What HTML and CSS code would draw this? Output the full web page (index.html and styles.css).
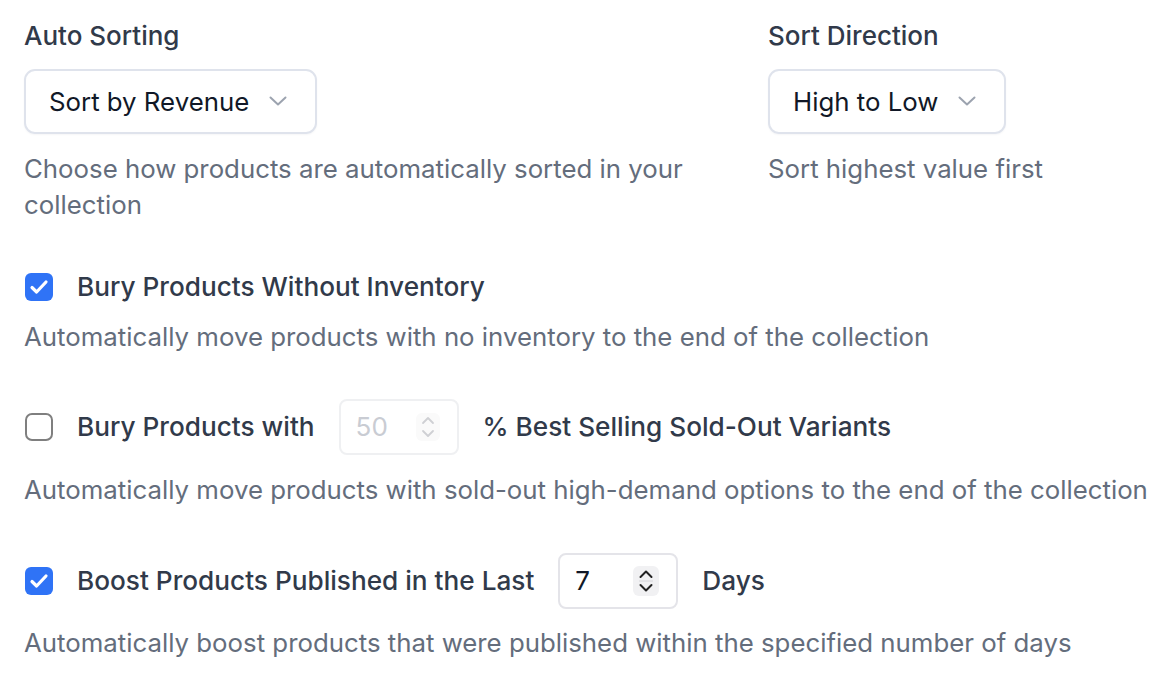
FILE: index.html
```html
<!DOCTYPE html>
<html lang="en">
<head>
    <meta charset="UTF-8">
    <meta name="viewport" content="width=device-width, initial-scale=1.0">
    <title>Collection Sorting</title>
    <link rel="stylesheet" href="styles.css">
</head>
<body>
    <div class="settings">
        <div class="sort-grid">
            <div class="field">
                <div class="field-label">Auto Sorting</div>
                <div class="select-box">
                    <span>Sort by Revenue</span>
                    <svg class="chevron" width="18" height="10" viewBox="0 0 18 10"><path d="M1.5 1.5 L9 8.5 L16.5 1.5" fill="none" stroke="#9ca3af" stroke-width="2" stroke-linecap="round" stroke-linejoin="round"/></svg>
                </div>
                <p class="help">Choose how products are automatically sorted in your collection</p>
            </div>
            <div class="field">
                <div class="field-label">Sort Direction</div>
                <div class="select-box">
                    <span>High to Low</span>
                    <svg class="chevron" width="18" height="10" viewBox="0 0 18 10"><path d="M1.5 1.5 L9 8.5 L16.5 1.5" fill="none" stroke="#9ca3af" stroke-width="2" stroke-linecap="round" stroke-linejoin="round"/></svg>
                </div>
                <p class="help">Sort highest value first</p>
            </div>
        </div>

        <div class="option first">
            <div class="option-row">
                <span class="checkbox checked">
                    <svg width="20" height="16" viewBox="0 0 20 16"><path d="M3 8.5 L7.6 13 L17 3" fill="none" stroke="#fff" stroke-width="3.2" stroke-linecap="round" stroke-linejoin="round"/></svg>
                </span>
                <span class="option-label">Bury Products Without Inventory</span>
            </div>
            <p class="help">Automatically move products with no inventory to the end of the collection</p>
        </div>

        <div class="option">
            <div class="option-row">
                <span class="checkbox"></span>
                <span class="option-label">Bury Products with</span>
                <div class="number-input disabled">
                    <span>50</span>
                    <span class="spinner">
                        <svg width="14" height="24" viewBox="0 0 14 24"><path d="M2 8 L7 3 L12 8" fill="none" stroke="currentColor" stroke-width="1.8" stroke-linecap="round" stroke-linejoin="round"/><path d="M2 16 L7 21 L12 16" fill="none" stroke="currentColor" stroke-width="1.8" stroke-linecap="round" stroke-linejoin="round"/></svg>
                    </span>
                </div>
                <span class="option-label">% Best Selling Sold-Out Variants</span>
            </div>
            <p class="help">Automatically move products with sold-out high-demand options to the end of the collection</p>
        </div>

        <div class="option last">
            <div class="option-row">
                <span class="checkbox checked">
                    <svg width="20" height="16" viewBox="0 0 20 16"><path d="M3 8.5 L7.6 13 L17 3" fill="none" stroke="#fff" stroke-width="3.2" stroke-linecap="round" stroke-linejoin="round"/></svg>
                </span>
                <span class="option-label">Boost Products Published in the Last</span>
                <div class="number-input">
                    <span>7</span>
                    <span class="spinner">
                        <svg width="16" height="26" viewBox="0 0 16 26"><path d="M2.5 9 L8 3.5 L13.5 9" fill="none" stroke="currentColor" stroke-width="2" stroke-linecap="round" stroke-linejoin="round"/><line x1="1" y1="13" x2="15" y2="13" stroke="#d6d6da" stroke-width="1"/><path d="M2.5 17 L8 22.5 L13.5 17" fill="none" stroke="currentColor" stroke-width="2" stroke-linecap="round" stroke-linejoin="round"/></svg>
                    </span>
                </div>
                <span class="option-label">Days</span>
            </div>
            <p class="help">Automatically boost products that were published within the specified number of days</p>
        </div>
    </div>
</body>
</html>
```

FILE: styles.css
```css
:root {
    --label-color: #313a4a;
    --help-color: #646d7c;
    --value-color: #111827;
    --border-color: #dfe3ec;
    --accent-color: #2f73f6;
}
* { margin: 0; padding: 0; box-sizing: border-box; }
body { font-family: Inter, "Noto Sans", "Liberation Sans", sans-serif; background: #fff; color: var(--label-color); }
.settings { padding: 18px 0 0 24px; width: 1158px; overflow: hidden; }
.sort-grid { display: grid; grid-template-columns: 695px 1fr; column-gap: 49px; }
.field { display: flex; flex-direction: column; align-items: flex-start; }
.field-label { font-size: 26px; line-height: 36px; font-weight: 500; color: var(--label-color); }
.select-box { display: inline-flex; align-items: center; gap: 20px; margin-top: 15px; height: 65px; padding: 0 28px 0 23px; border: 2px solid var(--border-color); border-radius: 11px; font-size: 25.8px; line-height: 36px; color: var(--value-color); box-shadow: 0 1px 2px rgba(16, 24, 40, 0.04); }
.chevron { display: block; flex-shrink: 0; margin-top: -2px; }
.help { font-size: 25.8px; line-height: 36px; color: var(--help-color); margin-top: 17px; }
.option { margin-top: 44px; }
.option.first { margin-top: 46px; }
.option.first .help { margin-top: 14px; }
.option.last { margin-top: 45px; }
.option-row { display: flex; align-items: center; gap: 24px; font-size: 26.2px; line-height: 36px; }
.option-label { font-weight: 500; color: var(--label-color); white-space: nowrap; }
.option .help { white-space: nowrap; }
.option.last .help { margin-top: 16px; }
.checkbox { width: 28px; height: 28px; margin-left: 1px; border: 2.5px solid #7f7f7f; border-radius: 7px; background: #fff; display: flex; align-items: center; justify-content: center; flex-shrink: 0; }
.checkbox.checked { background: var(--accent-color); border: none; border-radius: 6px; }
.number-input { display: flex; align-items: center; justify-content: space-between; width: 120px; height: 56px; padding: 0 17px 0 15px; border: 2px solid #e4e4e9; border-radius: 8px; font-size: 26px; color: var(--value-color); }
.number-input.disabled { border-color: #eff0f2; color: #c9ccd3; }
.spinner { display: flex; align-items: center; justify-content: center; width: 26px; height: 30px; border-radius: 6px; background: #f1f1f3; color: #222; }
.number-input.disabled .spinner { width: 24px; height: 28px; background: #fafafa; color: #cfd0d4; }
```
